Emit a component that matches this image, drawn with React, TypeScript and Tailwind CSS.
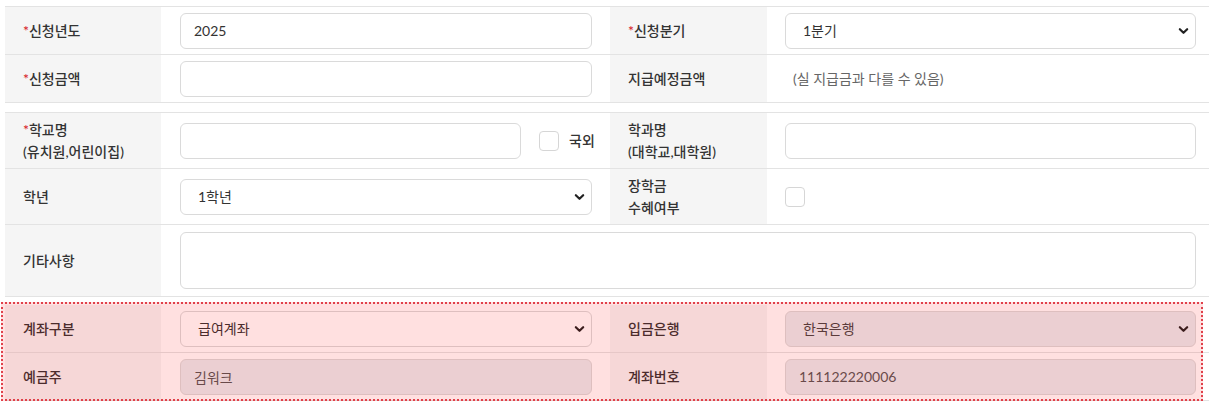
import React from "react";

const font = { fontFamily: "Lato, 'Noto Sans CJK KR', 'Noto Sans', sans-serif" };

function Chevron() {
  return (
    <svg
      width="11"
      height="11"
      viewBox="0 0 12 12"
      className="pointer-events-none absolute right-[7px] top-1/2 -translate-y-1/2"
    >
      <path d="M2 4 L6 8 L10 4" fill="none" stroke="#222" strokeWidth="2.4" strokeLinecap="round" strokeLinejoin="round" />
    </svg>
  );
}

function Label({ children, req }: { children: React.ReactNode; req?: boolean }) {
  return (
    <div className="flex items-center bg-[#f5f5f5] pl-[18px] text-[14px] font-medium leading-[22px] text-[#333]">
      <div>
        {req && <span className="text-[#d5141b]">*</span>}
        {children}
      </div>
    </div>
  );
}

function Cell({ children, right = false, className = "" }: { children?: React.ReactNode; right?: boolean; className?: string }) {
  return (
    <div className={"flex items-center " + (right ? "pl-[18px] pr-[20px] " : "pl-[19px] pr-[18px] ") + className}>
      {children}
    </div>
  );
}

function TextInput({ value = "", disabled = false }: { value?: string; disabled?: boolean }) {
  return (
    <input
      readOnly
      value={value}
      disabled={disabled}
      className={
        "h-9 w-full rounded-md border border-[#dadada] px-[13px] text-[14px] outline-none " +
        (disabled ? "bg-[#e9ecef] text-[#555]" : "bg-white text-[#333]")
      }
      style={font}
    />
  );
}

function Select({ value, disabled = false }: { value: string; disabled?: boolean }) {
  return (
    <div className="relative w-full">
      <select
        disabled={disabled}
        defaultValue={value}
        className={
          "h-9 w-full appearance-none rounded-md border border-[#dadada] pl-[17px] pr-8 text-[14px] outline-none " +
          (disabled ? "bg-[#e9ecef] text-[#444]" : "bg-white text-[#333]")
        }
        style={font}
      >
        <option>{value}</option>
      </select>
      <Chevron />
    </div>
  );
}

function Checkbox() {
  return <span className="inline-block h-[20px] w-[20px] shrink-0 rounded-[4px] border border-[#d6d6d6] bg-white" />;
}

const row = "grid grid-cols-[156px_449px_157px_449px] border-b border-[#e3e3e3]";

export default function App() {
  return (
    <div className="h-[407px] w-[1209px] overflow-hidden bg-white pl-[5px] pt-[6px]" style={font}>
      <div className="w-[1211px]">
        {/* Section A */}
        <div className="border-t border-[#e3e3e3]">
          <div className={row + " h-[48px]"}>
            <Label req>신청년도</Label>
            <Cell>
              <TextInput value="2025" />
            </Cell>
            <Label req>신청분기</Label>
            <Cell right>
              <Select value="1분기" />
            </Cell>
          </div>
          <div className={row + " h-[48px]"}>
            <Label req>신청금액</Label>
            <Cell>
              <TextInput />
            </Cell>
            <Label>지급예정금액</Label>
            <Cell right>
              <span className="pl-[8px] text-[14px] text-[#666]">(실 지급금과 다를 수 있음)</span>
            </Cell>
          </div>
        </div>

        {/* Section B */}
        <div className="mt-[9px] border-t border-[#e3e3e3]">
          <div className={row + " h-[56px]"}>
            <Label req>
              학교명
              <br />
              (유치원,어린이집)
            </Label>
            <div className="flex items-center pl-[19px]">
              <div className="w-[341px] shrink-0">
                <TextInput />
              </div>
              <div className="ml-[18px] flex">
                <Checkbox />
              </div>
              <span className="ml-[10px] whitespace-nowrap text-[14px] font-medium text-[#333]">국외</span>
            </div>
            <Label>
              학과명
              <br />
              (대학교,대학원)
            </Label>
            <Cell right>
              <TextInput />
            </Cell>
          </div>
          <div className={row + " h-[56px]"}>
            <Label>학년</Label>
            <Cell>
              <Select value="1학년" />
            </Cell>
            <Label>
              장학금
              <br />
              수혜여부
            </Label>
            <Cell right>
              <Checkbox />
            </Cell>
          </div>
          <div className="grid h-[72px] grid-cols-[156px_1055px] border-b border-[#e3e3e3]">
            <Label>기타사항</Label>
            <Cell right={false} className="!pr-[20px]">
              <textarea
                readOnly
                className="h-[57px] w-full resize-none rounded-md border border-[#dadada] bg-white outline-none"
              />
            </Cell>
          </div>
        </div>

        {/* Section C */}
        <div className="relative mt-[8px]">
          <div className={row + " h-[48px]"}>
            <Label>계좌구분</Label>
            <Cell>
              <Select value="급여계좌" />
            </Cell>
            <Label>입금은행</Label>
            <Cell right>
              <Select value="한국은행" disabled />
            </Cell>
          </div>
          <div className={row + " h-[48px]"}>
            <Label>예금주</Label>
            <Cell>
              <TextInput value="김워크" disabled />
            </Cell>
            <Label>계좌번호</Label>
            <Cell right>
              <TextInput value="111122220006" disabled />
            </Cell>
          </div>
          <div className="pointer-events-none absolute left-[-4px] top-[-3px] h-[99px] w-[1202px] border-2 border-dotted border-[#e0404a] bg-[rgba(255,0,0,0.12)]" />
        </div>
      </div>
    </div>
  );
}
